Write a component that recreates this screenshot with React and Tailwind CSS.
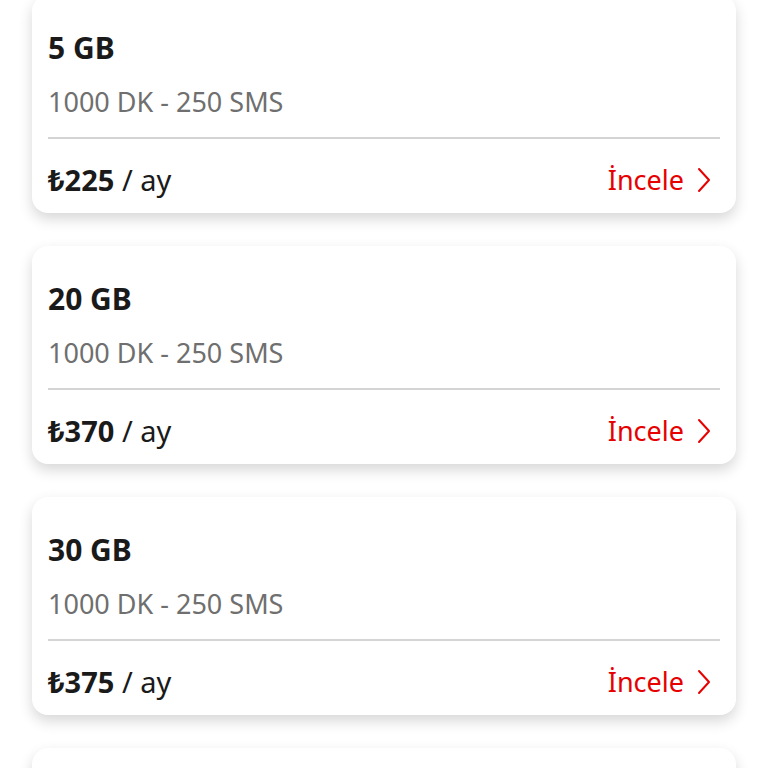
const plans = [
  { gb: "5 GB", price: "225" },
  { gb: "20 GB", price: "370" },
  { gb: "30 GB", price: "375" },
];

const Chevron = () => (
  <svg width="16" height="28" viewBox="0 0 16 28" fill="none">
    <path d="M3 3 L13 14 L3 25" stroke="#e60000" strokeWidth="2" strokeLinecap="round" strokeLinejoin="round" />
  </svg>
);

const PlanCard = ({ plan }) => {
  return (
    <div className="bg-white rounded-2xl shadow-[0_6px_14px_rgba(0,0,0,0.16)] h-[218px] px-4 flex flex-col">
      <div className="pt-[34px] text-[30px] font-bold leading-[38px] text-[#1a1a1a]">{plan.gb}</div>
      <div className="mt-[18px] text-[27px] leading-[34px] text-[#6f6f6f]">1000 DK - 250 SMS</div>
      <div className="mt-[18px] border-t-2 border-[#d4d4d4]"></div>
      <div className="flex items-center justify-between h-[74px] pt-[8px]">
        <div className="text-[29px] text-[#1a1a1a]">
          <span className="font-bold">₺{plan.price}</span>
          <span> / ay</span>
        </div>
        <div className="flex items-center gap-[12px] text-[27px] text-[#e60000] pr-[8px]">
          <span>İncele</span>
          <Chevron />
        </div>
      </div>
    </div>
  );
};

export default function App() {
  return (
    <div className="h-[768px] overflow-hidden bg-white" style={{ fontFamily: '"Noto Sans", "Open Sans", sans-serif' }}>
      <div className="mt-[-5px] px-8 flex flex-col gap-[33px]">
        {plans.map((p) => (
          <PlanCard key={p.gb} plan={p} />
        ))}
        {/* next card, only its top edge is on screen */}
        <div className="bg-white rounded-2xl shadow-[0_6px_14px_rgba(0,0,0,0.16)] h-[218px]"></div>
      </div>
    </div>
  );
}
